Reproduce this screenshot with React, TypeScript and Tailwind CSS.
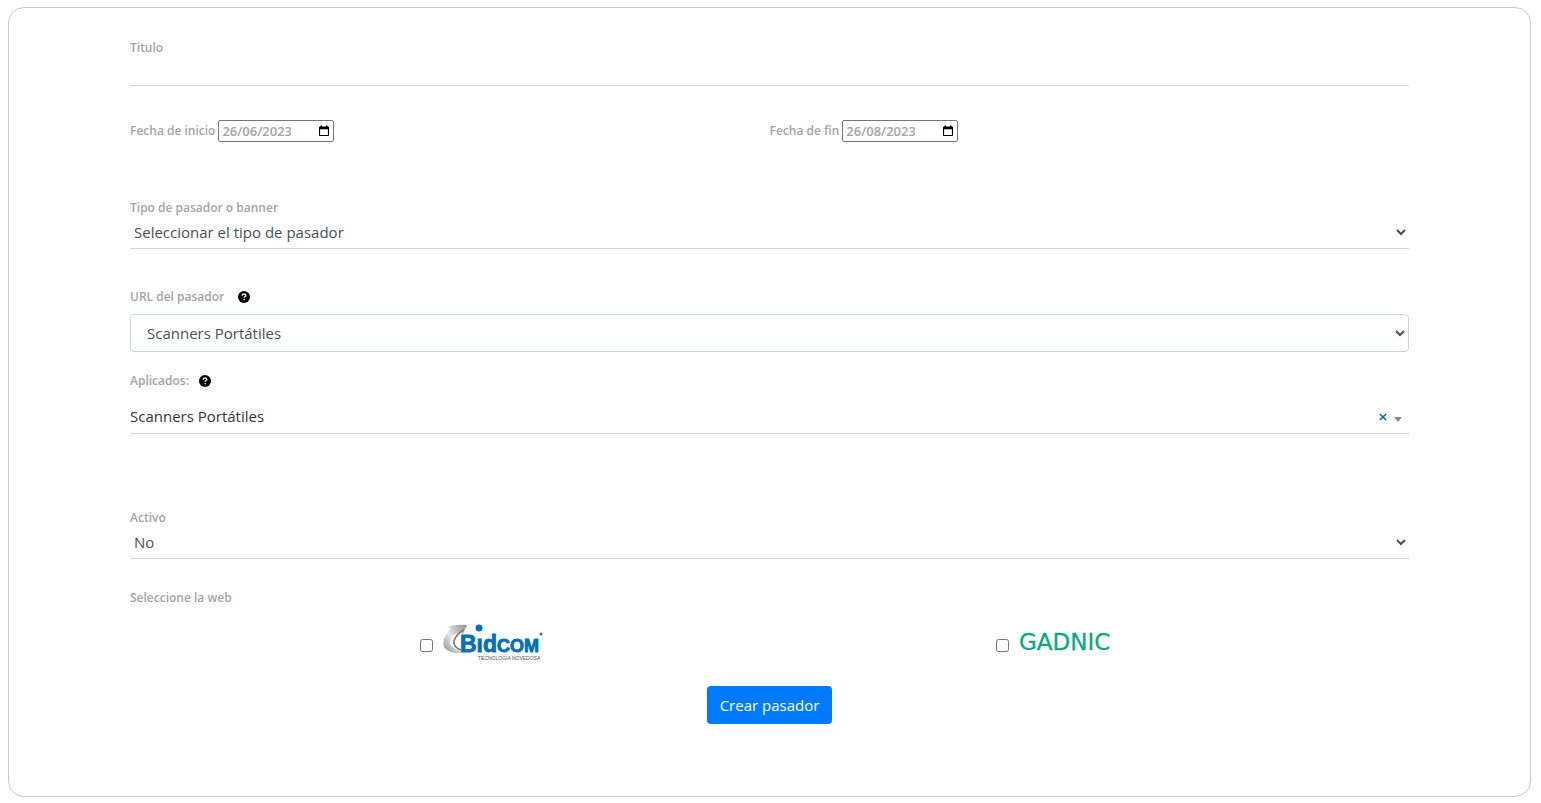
import { useState } from "react";
import type { ReactNode } from "react";

const labelClass = "flex h-4 items-center text-[12px] leading-4 font-semibold text-[#a4a4a4]";
const lineClass = "border-b border-[#d5d5d5]";

function HelpButton({ label }: { label: string }) {
  return (
    <button type="button" aria-label={label} className="size-3">
      <svg viewBox="0 0 12 12" className="block size-3" aria-hidden="true">
        <circle cx="6" cy="6" r="6" fill="#000" />
        <path d="M4.3 4.7C4.3 3.4 5 2.9 6 2.9s1.8.6 1.8 1.5C7.8 5.6 6.2 5.6 6.2 6.8" fill="none" stroke="#fff" strokeWidth="1.3" />
        <circle cx="6.2" cy="8.7" r="0.8" fill="#fff" />
      </svg>
    </button>
  );
}

function DateField({ id, label, initial }: { id: string; label: string; initial: string }) {
  const [value, setValue] = useState(initial);
  return (
    <div className="flex items-center gap-[3px]">
      <label htmlFor={id} className={labelClass}>{label}</label>
      <div className="flex h-[22px] w-[116px] items-center rounded-xs border border-[#767676] pr-1 pl-[3px]">
        <input
          id={id}
          type="text"
          inputMode="numeric"
          value={value}
          onChange={(e) => setValue(e.target.value)}
          className="min-w-0 flex-1 text-[13px] leading-4 font-semibold text-[#a4a4a4] outline-none"
        />
        <button type="button" aria-label={`Abrir calendario: ${label}`}>
          <svg viewBox="0 0 10 12" className="block h-3 w-[10px]" aria-hidden="true">
            <path d="M1.5 0.5h1.5v1h4v-1h1.5v1H9.2q.8 0 .8.8v8q0 .7-.8.7H.8Q0 11 0 10.3v-8q0-.8.8-.8h.7zM1.1 4.2v5.7h7.8V4.2z" fill="#000" fillRule="evenodd" />
          </svg>
        </button>
      </div>
    </div>
  );
}

function LineSelect({ id, label, options }: { id: string; label: string; options: string[] }) {
  return (
    <div>
      <label htmlFor={id} className={labelClass}>{label}</label>
      <select id={id} className={`block h-[33px] w-full bg-white text-[15px] text-[#495057] ${lineClass}`}>
        {options.map((o) => <option key={o}>{o}</option>)}
      </select>
    </div>
  );
}

function WebOption({ id, children }: { id: string; children: ReactNode }) {
  return (
    <div className="flex items-center justify-center gap-[10px]">
      <input id={id} type="checkbox" className="mt-[6px] size-[13px]" />
      <label htmlFor={id}>{children}</label>
    </div>
  );
}

function BidcomLogo() {
  return (
    <svg viewBox="0 0 100 40" className="block h-10 w-[100px]" role="img" aria-label="Bidcom">
      <defs>
        <linearGradient id="silver" x1="0" y1="1" x2="1" y2="0">
          <stop offset="0" stopColor="#8d8d8d" />
          <stop offset="0.45" stopColor="#e4e4e4" />
          <stop offset="1" stopColor="#8f8f8f" />
        </linearGradient>
      </defs>
      <path d="M4 5Q13 2 24 3L20 12L17 10Q9 12 7 20Q7 26 18 29L18 31Q6 32 1 25Q-2 16 8 7Q7 5 4 5Z" fill="url(#silver)" />
      <path d="M21 8Q13 12 11 19Q10 25 18 28" fill="none" stroke="#777" strokeWidth="1.6" />
      <g fontFamily="'Liberation Sans', Arial, sans-serif" fontWeight="700" fill="#0870b8" stroke="#0870b8" strokeWidth="0.9">
        <text x="17" y="30" fontSize="23">Bıd</text>
        <text x="54" y="30" fontSize="18">COM</text>
      </g>
      <circle cx="36" cy="6" r="3.5" fill="#0870b8" />
      <circle cx="98" cy="12" r="1.5" fill="#666" />
      <text x="35" y="38" fontFamily="'Liberation Sans', Arial, sans-serif" fontSize="5" fill="#555">TECNOLOGIA NOVEDOSA</text>
    </svg>
  );
}

function GadnicLogo() {
  return (
    <svg viewBox="0 0 100 40" className="block h-10 w-[100px]" role="img" aria-label="Gadnic">
      <text x="0" y="28" fontFamily="'DejaVu Sans', sans-serif" fontSize="23" fill="#0aa982" stroke="#0aa982" strokeWidth="0.3">GADNIC</text>
    </svg>
  );
}

export default function App() {
  const [applied, setApplied] = useState("Scanners Portátiles");
  return (
    <div className="pt-[7px] pr-[10px] pb-[6px] pl-2 font-['Open_Sans',sans-serif]">
      <form
        onSubmit={(e) => e.preventDefault()}
        className="flex flex-col rounded-2xl border border-[#c8c8c8] bg-white px-[121px] pt-8 pb-[72px]"
      >
        <div>
          <label htmlFor="titulo" className={labelClass}>Titulo</label>
          <input id="titulo" type="text" className={`block h-[30px] w-full text-[15px] text-[#495057] outline-none ${lineClass}`} />
        </div>

        <div className="mt-[34px] grid grid-cols-2">
          <DateField id="inicio" label="Fecha de inicio" initial="26/06/2023" />
          <DateField id="fin" label="Fecha de fin" initial="26/08/2023" />
        </div>

        <div className="mt-[58px]">
          <LineSelect id="tipo" label="Tipo de pasador o banner" options={["Seleccionar el tipo de pasador", "Pasador", "Banner"]} />
        </div>

        <div className="mt-10">
          <div className="flex items-center gap-[14px]">
            <label htmlFor="url" className={labelClass}>URL del pasador</label>
            <HelpButton label="Ayuda sobre la URL del pasador" />
          </div>
          <select id="url" className="mt-[9px] block h-[38px] w-full rounded-sm border border-[#ced4da] bg-white px-3 text-[15px] text-[#495057]">
            <option>Scanners Portátiles</option>
          </select>
        </div>

        <div className="mt-[21px]">
          <div className="flex items-center gap-[10px]">
            <label htmlFor="aplicados" className={labelClass}>Aplicados:</label>
            <HelpButton label="Ayuda sobre los aplicados" />
          </div>
          <div className={`mt-[10px] flex h-[35px] items-center ${lineClass}`}>
            <select
              id="aplicados"
              value={applied}
              onChange={(e) => setApplied(e.target.value)}
              className="min-w-0 flex-1 appearance-none text-[15px] text-[#333] outline-none"
            >
              <option value=""></option>
              <option>Scanners Portátiles</option>
            </select>
            <button type="button" aria-label="Quitar selección" onClick={() => setApplied("")} className="mt-[2px] mr-[7px]">
              <svg viewBox="0 0 8 8" className="block size-2" aria-hidden="true">
                <path d="M0.8 1L7.2 7M7.2 1L0.8 7" stroke="#0570a8" strokeWidth="1.7" />
              </svg>
            </button>
            <svg viewBox="0 0 8 5" className="mt-[6px] mr-[7px] block h-[5px] w-2" aria-hidden="true">
              <path d="M0 0h8L4 5z" fill="#888" />
            </svg>
          </div>
        </div>

        <div className="mt-[76px]">
          <LineSelect id="activo" label="Activo" options={["No", "Si"]} />
        </div>

        <fieldset className="mt-[31px]">
          <legend className={labelClass}>Seleccione la web</legend>
          <div className="mx-auto mt-4 grid w-[90%] grid-cols-2">
            <WebOption id="bidcom"><BidcomLogo /></WebOption>
            <WebOption id="gadnic"><GadnicLogo /></WebOption>
          </div>
        </fieldset>

        <button type="submit" className="mt-6 h-[38px] self-center rounded-sm bg-[#007bff] px-[13px] text-[15px] text-white">
          Crear pasador
        </button>
      </form>
    </div>
  );
}
